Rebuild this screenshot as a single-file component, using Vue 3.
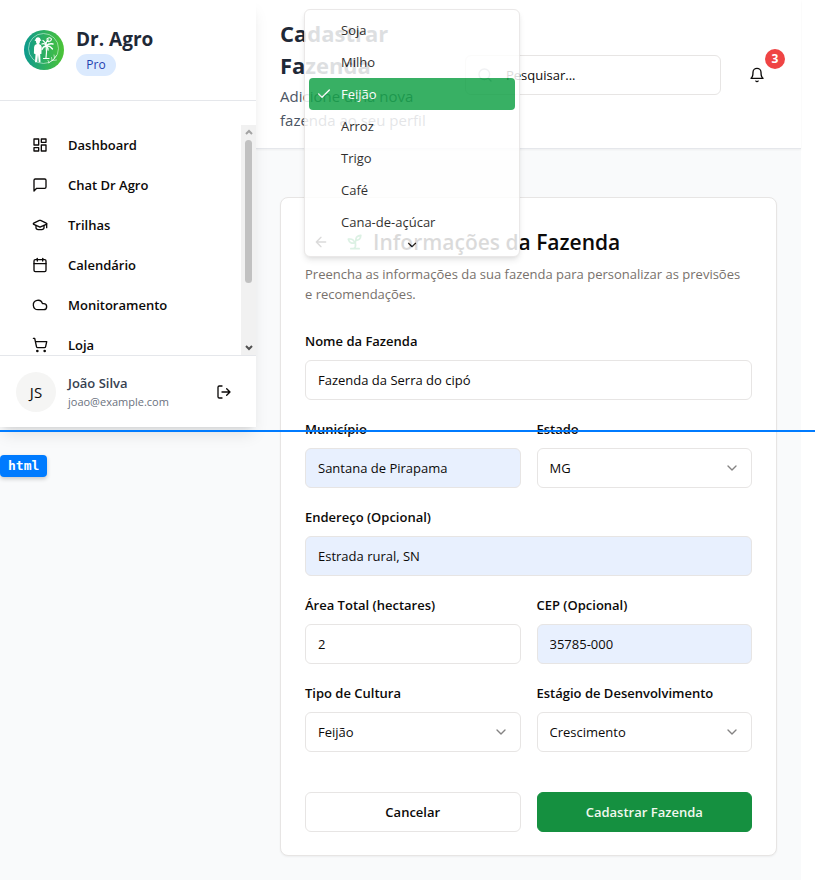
<script setup>
import { ref } from 'vue'

const navItems = [
  { label: 'Dashboard', icon: ['M3 3h7v9H3z', 'M14 3h7v5h-7z', 'M14 12h7v9h-7z', 'M3 16h7v5H3z'] },
  { label: 'Chat Dr Agro', icon: ['M21 15a2 2 0 0 1-2 2H7l-4 4V5a2 2 0 0 1 2-2h14a2 2 0 0 1 2 2z'] },
  {
    label: 'Trilhas',
    icon: [
      'M21.42 10.922a1 1 0 0 0-.019-1.838L12.83 5.18a2 2 0 0 0-1.66 0L2.6 9.08a1 1 0 0 0 0 1.832l8.57 3.908a2 2 0 0 0 1.66 0z',
      'M22 10v6',
      'M6 12.5V16a6 3 0 0 0 12 0v-3.5'
    ]
  },
  { label: 'Calendário', icon: ['M8 2v4', 'M16 2v4', 'M5 4h14a2 2 0 0 1 2 2v14a2 2 0 0 1-2 2H5a2 2 0 0 1-2-2V6a2 2 0 0 1 2-2z', 'M3 10h18'] },
  { label: 'Monitoramento', icon: ['M17.5 19H9a7 7 0 1 1 6.71-9h1.79a4.5 4.5 0 1 1 0 9Z'] },
  {
    label: 'Loja',
    icon: [
      'M7 21a1 1 0 1 0 2 0a1 1 0 1 0-2 0',
      'M18 21a1 1 0 1 0 2 0a1 1 0 1 0-2 0',
      'M2.05 2.05h2l2.66 12.42a2 2 0 0 0 2 1.58h9.78a2 2 0 0 0 1.95-1.57l1.65-7.43H5.12'
    ]
  }
]

const crops = ['Soja', 'Milho', 'Feijão', 'Arroz', 'Trigo', 'Café', 'Cana-de-açúcar']

const nome = ref('Fazenda da Serra do cipó')
const municipio = ref('Santana de Pirapama')
const estado = ref('MG')
const endereco = ref('Estrada rural, SN')
const area = ref('2')
const cep = ref('35785-000')
const cultura = ref('Feijão')
const estagio = ref('Crescimento')
const busca = ref('')
</script>

<template>
  <div class="page">
    <aside class="sidebar">
      <div class="brand">
        <svg class="logo" viewBox="0 0 40 40" aria-hidden="true">
          <defs>
            <linearGradient id="brandFill" x1="0" y1="0" x2="1" y2="0">
              <stop offset="0" stop-color="#0d9a8f" />
              <stop offset="1" stop-color="#4cc436" />
            </linearGradient>
          </defs>
          <circle cx="20" cy="20" r="20" fill="url(#brandFill)" />
          <circle cx="19.500" cy="18.500" r="15" fill="none" stroke="#d5f3e2" stroke-width=".6" />
          <path d="M10.500 10.500q1-.6 1.600-2.500q1.900-1.400 3.800 0q.6 1.900 1.600 2.500l-1.500.6q0 2-1 2.800q2.500.6 2.700 3l-.3 7h-1.200l.3 8.300h-1.800l-.7-7.500l-.8 7.500h-2.200l.5-8l-1.600-.7l.2-6.500q.2-2.500 2.800-3.100q-1-.8-1-2.800z" fill="#fff" />
          <g fill="none" stroke="#fff" stroke-linecap="round">
            <path d="M22 28q1-6 0-13M19.500 28.500h5.500" stroke-width="1.200" />
            <path d="M22 15q-2-2-4-1M22 15q-.5-3-3-4.500M22 15q0-4 2.500-5M22 16q3-3 7-2M22 16q4-.5 6.500 3M22 16q2.500 2 2 4M22 16q-3 .5-4 3.500" stroke-width="1.300" />
            <path d="M23 9q3-2.500 4.500 0q-.5 3-4 2.500z" stroke-width="1.100" />
            <path d="M24.500 33q5-2 8-7.500M28 30.500l-.5-3M30.500 28l-.5-3M28.500 30.500l4-.5M25 32.500l-1-2" stroke-width=".6" />
          </g>
        </svg>
        <div class="brand-text">
          <div class="brand-name">Dr. Agro</div>
          <span class="plan">Pro</span>
        </div>
      </div>
      <div class="nav-area">
        <nav class="nav">
          <a v-for="item in navItems" :key="item.label" href="#" class="nav-link">
            <svg class="icon" viewBox="0 0 24 24"><path v-for="d in item.icon" :key="d" :d="d" /></svg>
            <span>{{ item.label }}</span>
          </a>
        </nav>
        <div class="scrollbar" aria-hidden="true">
          <svg class="arrow up" viewBox="0 0 8 6"><path d="M1 5l3-3l3 3" /></svg>
          <div class="thumb"></div>
          <svg class="arrow down" viewBox="0 0 8 6"><path d="M1 1l3 3l3-3" /></svg>
        </div>
      </div>
      <div class="user">
        <div class="avatar">JS</div>
        <div class="user-text">
          <div class="user-name">João Silva</div>
          <div class="user-mail">joao@example.com</div>
        </div>
        <button type="button" class="icon-button" aria-label="Sair">
          <svg class="icon" viewBox="0 0 24 24"><path d="M9 21H5a2 2 0 0 1-2-2V5a2 2 0 0 1 2-2h4M16 17l5-5l-5-5M21 12H9" /></svg>
        </button>
      </div>
    </aside>

    <div class="content">
      <header class="topbar">
        <div class="heading">
          <h1>Cadastrar Fazenda</h1>
          <p>Adicione uma nova fazenda ao seu perfil</p>
        </div>
        <div class="search">
          <svg class="icon search-icon" viewBox="0 0 24 24"><circle cx="11" cy="11" r="8" /><path d="m21 21-4.300-4.300" /></svg>
          <input v-model="busca" class="control" type="search" placeholder="Pesquisar..." aria-label="Pesquisar" />
        </div>
        <button type="button" class="bell" aria-label="Notificações">
          <svg class="icon" viewBox="0 0 24 24"><path d="M6 8a6 6 0 0 1 12 0c0 7 3 9 3 9H3s3-2 3-9M10.300 21a1.940 1.940 0 0 0 3.400 0" /></svg>
          <span class="badge">3</span>
        </button>
      </header>

      <main class="main">
        <form class="card" @submit.prevent>
          <div class="card-title">
            <button type="button" class="icon-button" aria-label="Voltar">
              <svg class="icon" viewBox="0 0 24 24"><path d="m12 19-7-7 7-7M19 12H5" /></svg>
            </button>
            <svg class="icon sprout" viewBox="0 0 24 24">
              <path d="M7 20h10M10 20c5.500-2.500.8-6.400 3-10" />
              <path d="M9.500 9.400c1.100.8 1.800 2.200 2.300 3.700-2 .4-3.500.4-4.800-.3-1.200-.6-2.300-1.900-3-4.200 2.800-.5 4.400 0 5.500.8z" />
              <path d="M14.100 6a7 7 0 0 0-1.100 4c1.900-.1 3.300-.6 4.300-1.400 1-1 1.600-2.300 1.700-4.600-2.700.1-4 1-4.900 2z" />
            </svg>
            <h2>Informações da Fazenda</h2>
          </div>
          <p class="description">Preencha as informações da sua fazenda para personalizar as previsões e recomendações.</p>

          <div class="fields">
            <div class="field wide">
              <label for="nome">Nome da Fazenda</label>
              <input id="nome" v-model="nome" class="control" type="text" />
            </div>
            <div class="field">
              <label for="municipio">Município</label>
              <input id="municipio" v-model="municipio" class="control filled" type="text" />
            </div>
            <div class="field">
              <label for="estado">Estado</label>
              <div class="select">
                <select id="estado" v-model="estado" class="control"><option>MG</option></select>
                <svg class="icon" viewBox="0 0 24 24"><path d="m6 9 6 6 6-6" /></svg>
              </div>
            </div>
            <div class="field wide">
              <label for="endereco">Endereço (Opcional)</label>
              <input id="endereco" v-model="endereco" class="control filled" type="text" />
            </div>
            <div class="field">
              <label for="area">Área Total (hectares)</label>
              <input id="area" v-model="area" class="control" type="text" inputmode="decimal" />
            </div>
            <div class="field">
              <label for="cep">CEP (Opcional)</label>
              <input id="cep" v-model="cep" class="control filled" type="text" />
            </div>
            <div class="field">
              <label for="cultura">Tipo de Cultura</label>
              <div class="select">
                <select id="cultura" v-model="cultura" class="control">
                  <option v-for="crop in crops" :key="crop">{{ crop }}</option>
                </select>
                <svg class="icon" viewBox="0 0 24 24"><path d="m6 9 6 6 6-6" /></svg>
              </div>
            </div>
            <div class="field">
              <label for="estagio">Estágio de Desenvolvimento</label>
              <div class="select">
                <select id="estagio" v-model="estagio" class="control"><option>Crescimento</option></select>
                <svg class="icon" viewBox="0 0 24 24"><path d="m6 9 6 6 6-6" /></svg>
              </div>
            </div>
          </div>

          <div class="actions">
            <button type="button" class="button">Cancelar</button>
            <button type="submit" class="button primary">Cadastrar Fazenda</button>
          </div>
        </form>
      </main>
    </div>

    <div class="popover" role="listbox" aria-label="Tipo de Cultura">
      <button
        v-for="crop in crops"
        :key="crop"
        type="button"
        role="option"
        class="option"
        :class="{ selected: crop === cultura }"
        :aria-selected="crop === cultura"
        @click="cultura = crop"
      >
        <svg class="icon check" viewBox="0 0 24 24"><path v-if="crop === cultura" d="M20 6 9 17l-5-5" /></svg>
        <span>{{ crop }}</span>
      </button>
      <svg class="icon more" viewBox="0 0 24 24"><path d="m6 9 6 6 6-6" /></svg>
    </div>

    <div class="guide"></div>
    <div class="guide-tag">html</div>
  </div>
</template>

<style>
body {
  background: #fff;
}
</style>

<style scoped>
* {
  box-sizing: border-box;
}

.page {
  position: relative;
  display: flex;
  align-items: flex-start;
  min-height: 100vh;
  overflow: hidden;
  padding-right: 14px;
  background: linear-gradient(to left, #fff 14px, #f9fafb 14px);
  color: #0c0a09;
  font-family: "Segoe UI", "Open Sans", "Noto Sans", sans-serif;
  font-size: 13px;
  line-height: 20px;
}

h1,
h2,
p {
  margin: 0;
}

button,
input,
select {
  font: inherit;
  color: inherit;
}

.icon {
  flex: none;
  width: 16px;
  height: 16px;
  fill: none;
  stroke: currentColor;
  stroke-width: 2;
  stroke-linecap: round;
  stroke-linejoin: round;
}

.sidebar {
  position: relative;
  z-index: 1;
  flex: none;
  width: 256px;
  background: #fff;
  box-shadow: 0 10px 15px -3px rgba(0, 0, 0, 0.1), 0 4px 6px -4px rgba(0, 0, 0, 0.1);
}

.brand {
  display: flex;
  align-items: center;
  gap: 12px;
  padding: 24px;
  border-bottom: 1px solid #e5e7eb;
}

.logo {
  width: 40px;
  height: 40px;
}

.brand-name {
  color: #1f2937;
  font-size: 19px;
  font-weight: 700;
  line-height: 30px;
}

.plan {
  display: block;
  width: 40px;
  border-radius: 11px;
  background: #dbeafe;
  color: #1e40af;
  font-size: 12px;
  font-weight: 500;
  line-height: 22px;
  text-align: center;
}

.nav-area {
  display: flex;
  height: 255px;
  padding-top: 24px;
  border-bottom: 1px solid #e5e7eb;
  overflow: hidden;
}

.nav {
  flex: 1;
  padding-left: 32px;
}

.nav-link {
  display: flex;
  align-items: center;
  gap: 20px;
  height: 40px;
  color: inherit;
  font-weight: 600;
  text-decoration: none;
}

.scrollbar {
  display: flex;
  flex-direction: column;
  align-items: center;
  width: 15px;
  padding: 4px 0;
  background: #f1f1f1;
}

.arrow {
  width: 8px;
  height: 6px;
  fill: none;
  stroke: #a3a3a3;
  stroke-width: 2;
}

.arrow.down {
  margin-top: auto;
  stroke: #505050;
}

.thumb {
  width: 7px;
  height: 143px;
  margin-top: 5px;
  border-radius: 4px;
  background: #c1c1c1;
}

.user {
  display: flex;
  align-items: center;
  gap: 12px;
  padding: 16px 16px 15px;
}

.avatar {
  width: 40px;
  height: 40px;
  border-radius: 50%;
  background: #f5f5f4;
  font-size: 15px;
  line-height: 40px;
  text-align: center;
}

.user-text {
  flex: 1;
  min-width: 0;
}

.user-name {
  color: #374151;
  font-weight: 600;
}

.user-mail {
  color: #6b7280;
  font-size: 11px;
  line-height: 18px;
}

.icon-button {
  display: flex;
  padding: 8px;
  border: 0;
  background: none;
}

.content {
  flex: 1;
  min-width: 0;
}

.topbar {
  display: flex;
  align-items: center;
  gap: 16px;
  padding: 17px 24px 16px;
  border-bottom: 1px solid #e5e7eb;
  background: #fff;
  box-shadow: 0 1px 2px rgba(0, 0, 0, 0.05);
}

.heading {
  flex: 1;
}

h1 {
  color: #1f2937;
  font-size: 22px;
  font-weight: 700;
  line-height: 32px;
}

.heading p {
  margin-top: 3px;
  color: #4b5563;
  font-size: 15px;
  line-height: 24px;
}

.search {
  position: relative;
  width: 256px;
}

.search .control {
  padding-left: 40px;
}

.search .control::placeholder {
  color: #0c0a09;
  opacity: 1;
}

.search-icon {
  position: absolute;
  top: 12px;
  left: 12px;
  color: #9ca3af;
}

.bell {
  position: relative;
  display: flex;
  padding: 12px;
  border: 0;
  background: none;
}

.badge {
  position: absolute;
  top: -6px;
  right: -8px;
  width: 20px;
  height: 20px;
  border-radius: 50%;
  background: #ef4444;
  color: #fff;
  font-size: 12px;
  font-weight: 700;
  line-height: 20px;
  text-align: center;
}

.main {
  padding: 48px 24px 24px;
}

.card {
  padding: 24px 24px 23px;
  border: 1px solid #e7e5e4;
  border-radius: 8px;
  background: #fff;
  box-shadow: 0 1px 2px rgba(0, 0, 0, 0.05);
}

.card-title {
  display: flex;
  align-items: center;
  gap: 8px;
  height: 40px;
}

.sprout {
  width: 20px;
  height: 20px;
  color: #16a34a;
}

h2 {
  font-size: 21px;
  font-weight: 600;
  line-height: 32px;
  white-space: nowrap;
}

.description {
  margin-top: 2px;
  padding-right: 8px;
  color: #78716c;
}

.fields {
  display: grid;
  grid-template-columns: 1fr 1fr;
  gap: 18px 16px;
  margin-top: 26px;
}

.field {
  min-width: 0;
}

.wide {
  grid-column: 1 / -1;
}

label {
  display: block;
  margin-bottom: 8px;
  font-weight: 600;
  line-height: 22px;
}

.control {
  display: block;
  width: 100%;
  height: 40px;
  margin: 0;
  padding: 0 12px;
  border: 1px solid #e7e5e4;
  border-radius: 6px;
  background: #fff;
  appearance: none;
  outline: none;
}

.filled {
  background: #e8f0fe;
}

.select {
  position: relative;
}

.select .icon {
  position: absolute;
  top: 12px;
  right: 12px;
  opacity: 0.5;
  pointer-events: none;
}

.actions {
  display: grid;
  grid-template-columns: 1fr 1fr;
  gap: 16px;
  margin-top: 40px;
}

.button {
  height: 40px;
  border: 1px solid #e7e5e4;
  border-radius: 6px;
  background: #fff;
  font-weight: 600;
}

.primary {
  border-color: #159040;
  background: #159040;
  color: #f1f8ee;
}

.popover {
  position: absolute;
  z-index: 2;
  top: 9px;
  left: 304px;
  display: flex;
  flex-direction: column;
  width: 216px;
  padding: 4px;
  border: 1px solid #e7e5e4;
  border-radius: 6px;
  background: #fff;
  box-shadow: 0 4px 6px -1px rgba(0, 0, 0, 0.1), 0 2px 4px -2px rgba(0, 0, 0, 0.1);
  opacity: 0.85;
}

.option {
  display: flex;
  align-items: center;
  gap: 9px;
  height: 32px;
  padding: 0 7px;
  border: 0;
  border-radius: 4px;
  background: none;
  text-align: left;
}

.selected {
  background: #16a34a;
  color: #fff;
}

.more {
  align-self: center;
  height: 14px;
}

.guide {
  position: absolute;
  z-index: 3;
  top: 430px;
  left: 0;
  right: 0;
  height: 2px;
  background: #007bff;
}

.guide-tag {
  position: absolute;
  z-index: 3;
  top: 455px;
  left: 0;
  padding: 0 8px;
  border-radius: 4px;
  background: #007bff;
  box-shadow: 0 2px 4px rgba(0, 0, 0, 0.2);
  color: #fff;
  font-family: "DejaVu Sans Mono", monospace;
  font-size: 13px;
  font-weight: 700;
  line-height: 22px;
}
</style>
